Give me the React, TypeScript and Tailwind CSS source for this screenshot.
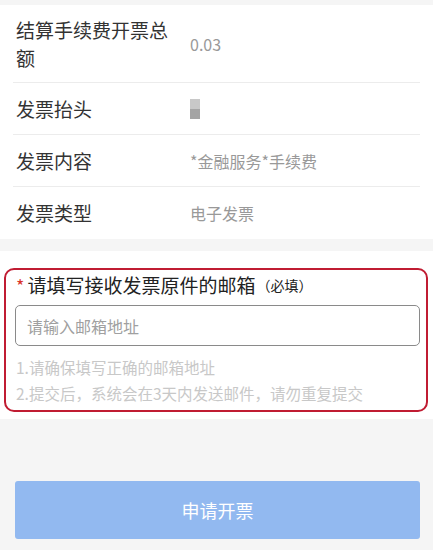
import React from 'react';

const rows = [
  { label: '结算手续费开票总额', value: '0.03', tall: true },
  { label: '发票抬头', value: '', tall: false },
  { label: '发票内容', value: '*金融服务*手续费', tall: false },
  { label: '发票类型', value: '电子发票', tall: false },
];

const font = { fontFamily: '"Noto Sans CJK SC", "Noto Sans", sans-serif' };

const App: React.FC = () => {
  return (
    <div className="w-[433px] h-[550px] bg-[#f5f5f5] overflow-hidden" style={font}>
      <div className="h-[5px]" />
      <div className="bg-white">
        {rows.map((r, i) => (
          <div
            key={r.label}
            className={`flex items-center mx-[13px] ${i < rows.length - 1 ? 'border-b border-[#ececec]' : ''} ${r.tall ? 'h-[78px]' : 'h-[52px]'}`}
          >
            <div className="w-[177px] pl-[3px] pr-[20px] text-[19px] leading-[28px] text-[#333]">{r.label}</div>
            {r.label === '发票抬头' ? (
              <div className="flex flex-col">
                <div className="w-[10px] h-[10px] bg-[#c8c8c8]" />
                <div className="w-[10px] h-[10px] bg-[#a4a4a4]" />
              </div>
            ) : (
              <div className="text-[16px] text-[#999]">{r.value}</div>
            )}
          </div>
        ))}
      </div>

      <div className="h-[12px]" />

      <div className="bg-white pt-[17px] pb-[7px] pl-[4px] pr-[5px]">
        <div className="border-2 border-[#c01c32] rounded-[10px] pb-[4px]">
          <div className="flex items-center pl-[10px] h-[30px]">
            <span className="text-[#d9342b] text-[18px] mr-[3px]">*</span>
            <span className="text-[19px] text-[#222]">请填写接收发票原件的邮箱</span>
            <span className="text-[14px] text-[#222] ml-[1px]">（必填）</span>
          </div>
          <div className="mt-[5px] ml-[9px] mr-[6px] h-[41px] border border-[#8a8a8a] rounded-[5px] flex items-center pl-[11px]">
            <span className="text-[16px] text-[#a0a0a0]">请输入邮箱地址</span>
          </div>
          <div className="pl-[10px] mt-[8px] text-[15.5px] leading-[26px] text-[#c8c8c8]">
            <div>1.请确保填写正确的邮箱地址</div>
            <div>2.提交后，系统会在3天内发送邮件，请勿重复提交</div>
          </div>
        </div>
      </div>

      <div className="pl-[15px] pt-[62px] pr-[13px]">
        <div className="h-[58px] bg-[#92b9f0] rounded-[3px] flex items-center justify-center">
          <span className="text-white text-[18px]">申请开票</span>
        </div>
      </div>
    </div>
  );
};

export default App;
